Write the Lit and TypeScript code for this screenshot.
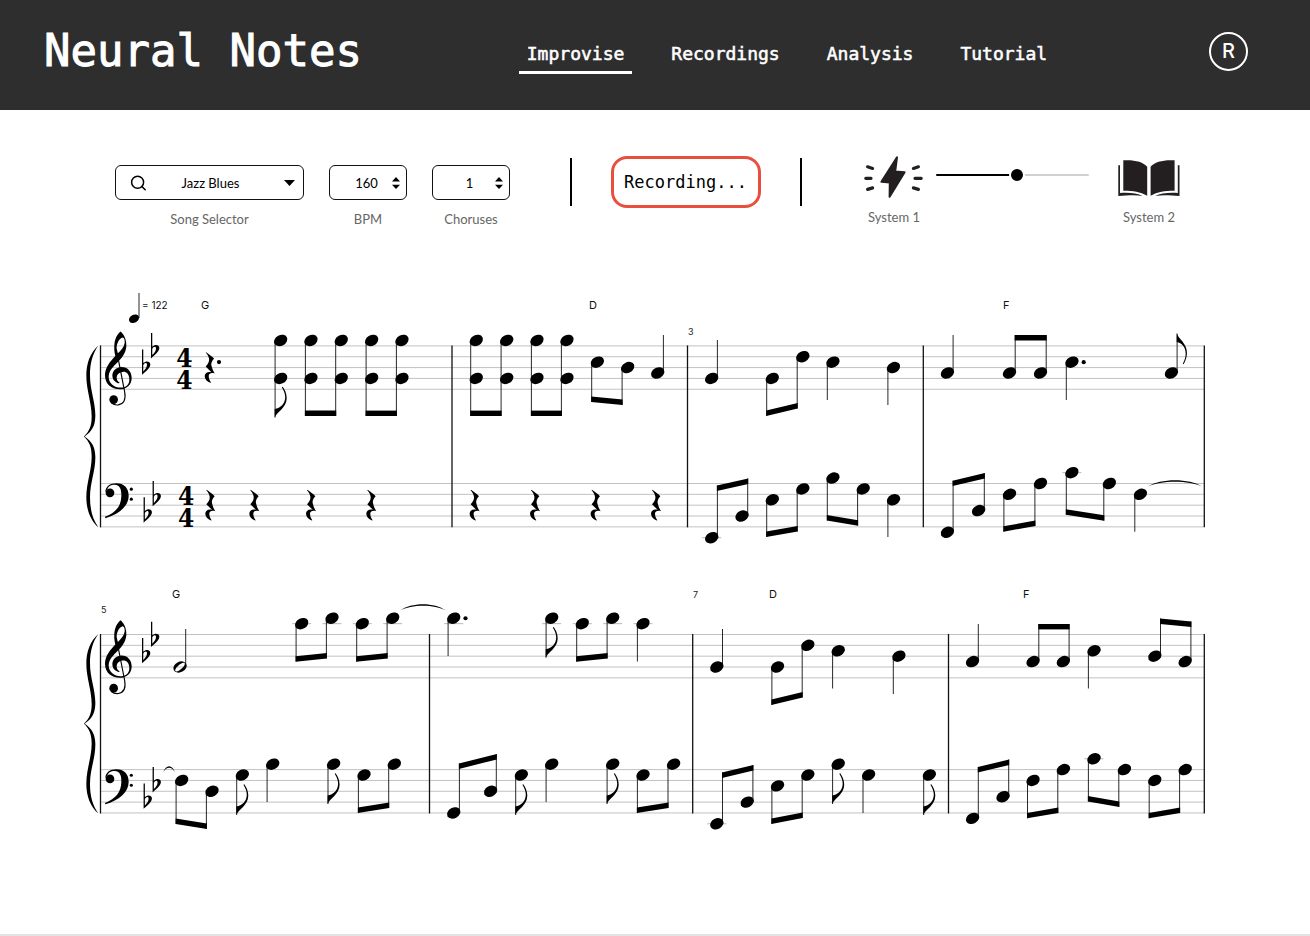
import { LitElement, html, svg, css } from "lit";
import { customElement, property, state } from "lit/decorators.js";

type Pt = [number, number[]];

/** A stemmed group: one or more heads, with the stem ends of its first and last head. */
interface Group {
  heads: Pt[];
  up?: boolean;
  ends: [number, number?];
  flag?: boolean;
  dot?: boolean;
  half?: boolean;
}

interface Staff {
  top: number;
  groups: Group[];
  rests?: [number, boolean?][];
  ties?: [number, number, number, number][];
}

interface System {
  bars: number[];
  treble: Staff;
  bass: Staff;
  chords: [string, number, number][];
  numbers: [string, number, number][];
  time?: boolean;
}

const STEP = 5.42;

const down = (ends: [number, number?], ...heads: Pt[]): Group => ({ heads, ends });
const up = (ends: [number, number?], ...heads: Pt[]): Group => ({ heads, ends, up: true });
const chordPair = (a: number, b: number): Group =>
  down([416, 416], [a, [-1, 6]], [b, [-1, 6]]);

const SYSTEMS: System[] = [
  {
    bars: [100.5, 452, 687.5, 923.3, 1204.3],
    time: true,
    chords: [["G", 201, 309], ["D", 589, 309], ["F", 1003, 309]],
    numbers: [["3", 688, 335]],
    treble: {
      top: 345.9,
      rests: [[204.7, true]],
      groups: [
        { ...down([417.5], [280.7, [-1, 6]]), flag: true },
        chordPair(311, 341.3),
        chordPair(371.7, 402),
        chordPair(476.3, 506.7),
        chordPair(537, 567),
        down([402, 405], [597.3, [3]], [627.7, [4]]),
        up([335], [657.7, [5]]),
        up([340], [711.7, [6]]),
        down([416, 408.5], [772.3, [6]], [802.8, [2]]),
        down([400], [832.9, [3]]),
        down([405], [893.5, [4]]),
        up([335], [947.4, [5]]),
        up([335, 335], [1009.5, [5]], [1040.5, [5]]),
        { ...down([400], [1071.9, [3]]), dot: true },
        { ...up([333.5], [1171.4, [5]]), flag: true },
      ],
    },
    bass: {
      top: 483.5,
      rests: [[205.3], [249.3], [306], [366.3], [469.6], [530], [590.6], [651]],
      ties: [[1147.5, 486.5, 1202.5, 478]],
      groups: [
        up([485.5, 478.5], [711.7, [10]], [742, [6]]),
        down([537, 531.5], [772.3, [3]], [802.8, [1]]),
        down([520.5, 525.7], [832.9, [-1]], [863.2, [1]]),
        down([537], [893.5, [3]]),
        up([480.7, 473], [947.4, [9]], [978.6, [5]]),
        down([531.7, 526], [1009.5, [2]], [1040.5, [0]]),
        down([514.7, 520.7], [1071.9, [-2]], [1109.4, [0]]),
        down([531.7], [1140.4, [2]]),
      ],
    },
  },
  {
    bars: [100.5, 429.5, 692.7, 948.5, 1204.3],
    chords: [["G", 172, 598], ["D", 769, 598], ["F", 1023, 598]],
    numbers: [["5", 101, 613], ["7", 693, 598]],
    treble: {
      top: 634.5,
      ties: [[400, 610.5, 446, 602]],
      groups: [
        { ...up([629], [180, [6]]), half: true },
        down([661.7, 658.5], [301.7, [-2]], [332, [-3]]),
        down([661.7, 658.5], [362.3, [-2]], [392.7, [-3]]),
        { ...down([656], [453.7, [-3]]), dot: true },
        { ...down([657.7], [551.7, [-3]]), flag: true },
        down([661.7, 658.5], [582.3, [-2]], [612.7, [-3]]),
        down([661.5], [643, [-2]]),
        up([629], [716.8, [6]]),
        down([705, 697.5], [777.5, [6]], [807.8, [2]]),
        down([688.5], [838.2, [3]]),
        down([694], [898.9, [4]]),
        up([624], [972.6, [5]]),
        up([624, 624], [1033.1, [5]], [1063.4, [5]]),
        down([688.5], [1094, [3]]),
        up([618.5, 621.5], [1154.8, [4]], [1185.2, [5]]),
      ],
    },
    bass: {
      top: 769.6,
      ties: [[163.2, 772.5, 175, 764]],
      groups: [
        down([824, 829], [181.7, [2]], [212, [4]]),
        { ...down([815], [242.3, [1]]), flag: true },
        down([802], [272.7, [-1]]),
        { ...down([804], [333.6, [-1]]), flag: true },
        down([813, 808], [364, [1]], [394.3, [-1]]),
        up([763.5, 754], [453.7, [8]], [490.6, [4]]),
        { ...down([815], [521.3, [1]]), flag: true },
        down([802], [551.7, [-1]]),
        { ...down([804], [612.7, [-1]]), flag: true },
        down([813, 808], [643, [1]], [673.6, [-1]]),
        up([772.5, 765], [716.8, [10]], [747.2, [6]]),
        down([824, 818], [777.5, [3]], [807.8, [1]]),
        { ...down([804], [838.2, [-1]]), flag: true },
        down([813], [868.6, [1]]),
        { ...down([815], [929.3, [1]]), flag: true },
        up([767, 759.5], [972.6, [9]], [1003, [5]]),
        down([818.3, 813], [1033.1, [2]], [1063.4, [0]]),
        down([801.5, 807], [1094, [-2]], [1124.4, [0]]),
        down([818.3, 813], [1154.8, [2]], [1185.2, [0]]),
      ],
    },
  },
];

@customElement("music-score")
export class MusicScore extends LitElement {
  static styles = css`
    :host { display: block; }
    .sheet { display: block; width: 100%; height: auto; font-family: Inter, sans-serif; }
    .chord { font-size: 11px; fill: #111; }
    .tempo { font-size: 10px; fill: #111; }
    .number { font-size: 9px; fill: #222; }
    .time { font: bold 26px "DejaVu Serif Condensed", "DejaVu Serif", serif; text-anchor: middle; }
    .line { stroke: #c2c2c2; stroke-width: 1; }
    .ledger { stroke: #999; stroke-width: 0.7; }
    .bar { stroke: #111; stroke-width: 1.3; }
    .stem { stroke: #111; stroke-width: 0.9; }
    .curl { fill: none; stroke: #000; stroke-width: 3.4; }
  `;

  private head(x: number, y: number, half = false) {
    return half
      ? svg`<g transform="translate(${x} ${y}) rotate(-28)">
          <path fill-rule="evenodd" d="M-7 0A7 5.2 0 1 1 7 0A7 5.2 0 1 1 -7 0Z M-6 1.4C-5 4.2 6.4 1.6 6 -1.4C5 -4.2 -6.4 -1.6 -6 1.4Z"/></g>`
      : svg`<ellipse rx="7" ry="5.3" transform="translate(${x} ${y}) rotate(-28)"/>`;
  }

  private group(g: Group, top: number) {
    const first = g.heads[0][0];
    const last = g.heads[g.heads.length - 1][0];
    const side = g.up ? 5.7 : -5.6;
    const [a, b = a] = g.ends;
    const beamed = g.heads.length > 1;
    const thick = g.up ? 5.4 : -5.4;
    return svg`
      ${g.heads.map(([x, steps], i) => {
        const ys = steps.map((s) => top + s * STEP);
        const root = g.up ? Math.max(...ys) : Math.min(...ys);
        const end = i === 0 ? a : b;
        return svg`
          ${steps.filter((s) => s <= -2 || s >= 10).map((s) => {
            const y = top + (s < 0 ? -2 : 10) * STEP;
            return svg`<line class="ledger" x1=${x - 9.5} x2=${x + 9.5} y1=${y} y2=${y}/>`;
          })}
          <line class="stem" x1=${x + side} x2=${x + side} y1=${root} y2=${end}/>
          ${ys.map((y) => this.head(x, y, g.half))}
          ${g.dot ? svg`<circle cx=${x + 11.8} cy=${root} r="2.1"/>` : null}`;
      })}
      ${beamed
        ? svg`<path d="M${first + side - 0.5} ${a}L${last + side + 0.5} ${b}V${b + thick}L${first + side - 0.5} ${a + thick}Z"/>`
        : null}
      ${g.flag
        ? svg`<path transform="translate(${first + side} ${a}) scale(${g.up ? 0.85 : 1} ${g.up ? -1 : 1})"
            d="M-.4 0C1.6 -5.5 11.6 -9.5 11.6 -19.5C11.6 -24 9.5 -28.2 7.6 -30.7L6.7 -30.2C8.8 -27 10.1 -23.6 10.1 -20.2C10 -13.6 5.5 -9.4 -.4 -8.6Z"/>`
        : null}`;
  }

  private rest(x: number, top: number, dot = false) {
    return svg`<g transform="translate(${x} ${top + 6.3}) scale(.3333)">
        <path d="M4 0C12 6 23 13 28 19C20 28 18 36 21 43C23 50 25 56 30 64C21 61 13 63 12 71C12 79 15 86 19 91L17 92C7 88 0 81 0 72C0 62 9 57 20 60L3 43C11 35 14 28 13 20C12 12 7 6 3 1Z"/>
      </g>
      ${dot ? svg`<circle cx=${x + 14.3} cy=${top + 16.2} r="2.1"/>` : null}`;
  }

  private flat(x: number, y: number) {
    return svg`<path transform="translate(${x} ${y}) scale(.3333)" fill-rule="evenodd"
      d="M0 0H3.8V41C12 33 25 35 25 45C24 57 12 65 0 76Z M3.8 47V66C10 60 15 53 15 46C15 38 7 40 3.8 47Z"/>`;
  }

  private staff(s: Staff, bass: boolean, time = false) {
    const shift = bass ? 1.6 : 0;
    const flatDrop = bass ? 13.8 : 3.5;
    return svg`
      ${[0, 2, 4, 6, 8].map((n) => {
        const y = s.top + n * STEP;
        return svg`<line class="line" x1="100" x2="1204" y1=${y} y2=${y}/>`;
      })}
      ${bass
        ? svg`<g transform="translate(75 ${s.top}) scale(.3333)">
            <circle cx="105" cy="28" r="13"/>
            <path d="M91 26C91 9 105 -1 124 -1C147 -1 161 13 161 37C161 68 132 92 91 104L90 100C123 87 138 68 139 38C140 17 134 4 119 4C107 4 99 10 97 18Z"/>
            <circle cx="169" cy="17" r="4.8"/><circle cx="169" cy="47" r="4.8"/></g>`
        : svg`<g transform="translate(75 ${s.top}) scale(.3333)">
            <path fill-rule="evenodd" d="M137 -43C149 -32 155 -16 154 2C152 26 136 41 124 53C111 66 101 77 101 94C102 114 119 126 139 125C154 124 164 115 163 99C162 84 154 77 143 78C131 79 125 87 125 95C125 103 129 108 134 110C133 113 130 113 127 111C117 107 112 99 112 89C112 75 124 63 140 63C158 63 170 77 170 96C170 117 154 130 135 130C108 130 90 114 90 88C90 64 106 46 121 30C118 18 117 8 118 -2C119 -20 126 -35 137 -43Z M143 -25C133 -23 126 -8 125 3C125 11 125 17 128 23C139 12 147 4 149 -9C150 -18 147 -25 143 -25Z"/>
            <path class="curl" d="M124 10L149 138C153 160 146 174 130 177C122 178 115 176 109 171"/>
            <circle cx="116" cy="161" r="13"/></g>`}
      ${this.flat(142 + shift, s.top + flatDrop)}
      ${this.flat(151 + shift, s.top + flatDrop - 16.3)}
      ${time
        ? svg`<text class="time" y=${s.top + 21.3}><tspan x=${184.5 + shift}>4</tspan><tspan x=${184.5 + shift} dy="21.7">4</tspan></text>`
        : null}
      ${s.rests?.map(([x, dot]) => this.rest(x, s.top, dot))}
      ${s.groups.map((g) => this.group(g, s.top))}
      ${s.ties?.map(([x1, y, x2, peak]) => {
        const q = (x2 - x1) / 4;
        return svg`<path d="M${x1} ${y}C${x1 + q} ${peak} ${x2 - q} ${peak} ${x2} ${y}C${x2 - q} ${peak + 2} ${x1 + q} ${peak + 2} ${x1} ${y}Z"/>`;
      })}`;
  }

  private system(s: System) {
    const top = s.treble.top - 0.5;
    const bottom = s.bass.top + 8 * STEP + 0.5;
    return svg`
      <path transform="translate(75 ${top}) scale(.3333 ${(bottom - top) / 546})"
        d="M70 0C45 22 34 55 34 90C34 135 50 170 50 213C50 243 42 258 27 273C42 288 50 303 50 333C50 376 34 411 34 456C34 491 45 524 70 546C52 520 45 491 45 456C45 411 62 376 61 333C60 303 50 288 29 273C50 258 60 243 61 213C62 170 45 135 45 90C45 55 52 26 70 0Z"/>
      ${this.staff(s.treble, false, s.time)}
      ${this.staff(s.bass, true, s.time)}
      ${s.bars.map((x) => svg`<line class="bar" x1=${x} x2=${x} y1=${top} y2=${bottom}/>`)}
      ${s.chords.map(([t, x, y]) => svg`<text class="chord" x=${x} y=${y}>${t}</text>`)}
      ${s.numbers.map(([t, x, y]) => svg`<text class="number" x=${x} y=${y}>${t}</text>`)}`;
  }

  render() {
    return html`<svg class="sheet" viewBox="0 280 1310 560" role="img" aria-label="Sheet music">
      <line class="stem" x1="139" x2="139" y1="293" y2="318"/>
      <ellipse rx="5.3" ry="3.9" transform="translate(134 318.8) rotate(-28)"/>
      <text class="tempo" x="142" y="309">= 122</text>
      ${SYSTEMS.map((s) => this.system(s))}
    </svg>`;
  }
}

@customElement("number-field")
export class NumberField extends LitElement {
  static styles = css`
    :host { display: block; font-family: Lato, sans-serif; }
    .field { display: flex; flex-direction: column; align-items: center; gap: 11px; width: 78px; }
    .box { display: grid; align-items: center; box-sizing: border-box; width: 100%; height: 35px; border: 1px solid #111; border-radius: 6px; }
    .value { grid-area: 1 / 1; box-sizing: border-box; width: 100%; padding: 0 3px 0 0; border: 0; outline: 0; background: none; font: 13px Lato, sans-serif; color: #000; text-align: center; appearance: textfield; }
    .value::-webkit-inner-spin-button { appearance: none; margin: 0; }
    .arrows { grid-area: 1 / 1; justify-self: end; margin-right: 6px; pointer-events: none; }
    .label { font-size: 13px; line-height: 16px; color: #666; }
  `;
  @property() label = "";
  @property({ type: Number }) value = 0;

  render() {
    return html`<div class="field">
      <div class="box">
        <input id="value" class="value" type="number" min="1" .value=${String(this.value)} />
        <svg class="arrows" width="8" height="12" viewBox="0 0 8 12"><path d="M4 0L8 4.6H0ZM4 12L8 7.8H0Z"/></svg>
      </div>
      <label class="label" for="value">${this.label}</label>
    </div>`;
  }
}

@customElement("app-root")
export class AppRoot extends LitElement {
  static styles = css`
    :host { display: flex; flex-direction: column; box-sizing: border-box; min-height: 100vh; border-bottom: 2px solid #e4e4e4; background: #fff; color: #000; font-family: Lato, sans-serif; }
    .header { display: flex; align-items: center; justify-content: space-between; box-sizing: border-box; height: 110px; padding: 0 62px 8px 44px; background: #2e2e2e; color: #fff; }
    .logo { margin: 0; font: 44px/52px "DejaVu Sans Mono", monospace; -webkit-text-stroke: 1px #fff; }
    .nav { display: flex; gap: 31px; margin-left: 3px; }
    .link { padding: 14px 8px 5px; border-bottom: 3px solid transparent; font: 18px/24px "DejaVu Sans Mono", monospace; -webkit-text-stroke: 0.03em #fff; color: #fff; text-decoration: none; }
    .current { border-color: #fff; }
    .avatar { box-sizing: border-box; width: 39px; height: 39px; padding: 0; border: 2px solid #fff; border-radius: 50%; background: none; color: #fff; font: 500 20px Inter, sans-serif; }
    .toolbar { display: flex; justify-content: space-between; padding: 46px 130px 0 115px; }
    .fields { display: flex; gap: 25px; padding-top: 9px; }
    .song { display: flex; flex-direction: column; align-items: center; gap: 11px; width: 189px; }
    .box { display: grid; align-items: center; box-sizing: border-box; width: 100%; height: 35px; border: 1px solid #111; border-radius: 6px; }
    .select { grid-area: 1 / 1; width: 100%; height: 100%; padding: 0 0 0 2px; border: 0; outline: 0; background: none; appearance: none; font: 13px Lato, sans-serif; color: #000; text-align: center; text-align-last: center; }
    .search { grid-area: 1 / 1; margin-left: 14px; pointer-events: none; }
    .caret { grid-area: 1 / 1; justify-self: end; margin-right: 8px; pointer-events: none; }
    .label { font-size: 13px; line-height: 16px; color: #666; }
    .middle { display: flex; align-items: center; gap: 39px; height: 52px; margin-right: 3px; }
    .divider { width: 2px; height: 48px; background: #000; }
    .record { height: 52px; width: 150px; padding: 0; border: 3px solid #e94f3f; border-radius: 16px; background: #fff; color: #000; font: 17px "DejaVu Sans Mono", monospace; white-space: nowrap; }
    .systems { display: flex; }
    .system { display: flex; flex-direction: column; align-items: center; gap: 11px; }
    .icon { display: block; fill: #231f20; stroke: #231f20; stroke-linejoin: round; stroke-linecap: round; }
    .slider { width: 153px; height: 16px; margin: 11px 29px 0 12px; appearance: none; background: none; }
    .slider::-webkit-slider-runnable-track { height: 2px; border-radius: 1px; background: linear-gradient(90deg, #000 var(--level), #d0d0d0 var(--level)); }
    .slider::-webkit-slider-thumb { appearance: none; box-sizing: border-box; width: 16px; height: 16px; margin-top: -7px; border: 2px solid #fff; border-radius: 50%; background: #000; }
    .score { margin-top: 53px; }
  `;

  @state() private balance = 53;

  render() {
    return html`
      <header class="header">
        <h1 class="logo">Neural Notes</h1>
        <nav class="nav">
          ${["Improvise", "Recordings", "Analysis", "Tutorial"].map(
            (name, i) => html`<a class="link ${i === 0 ? "current" : ""}" href="#${name.toLowerCase()}">${name}</a>`
          )}
        </nav>
        <button class="avatar">R</button>
      </header>
      <main>
        <section class="toolbar">
          <div class="fields">
            <div class="song">
              <div class="box">
                <select id="song" class="select"><option>Jazz Blues</option></select>
                <svg class="search" width="16" height="16" viewBox="0 0 16 16" fill="none" stroke="#000" stroke-width="1.5" stroke-linecap="round">
                  <circle cx="7.6" cy="7.2" r="6"/><path d="M12 11.6L15.2 14.8"/>
                </svg>
                <svg class="caret" width="11" height="6" viewBox="0 0 11 6"><path d="M0 0H11L5.5 6Z"/></svg>
              </div>
              <label class="label" for="song">Song Selector</label>
            </div>
            <number-field label="BPM" .value=${160}></number-field>
            <number-field label="Choruses" .value=${1}></number-field>
          </div>
          <div class="middle">
            <span class="divider"></span>
            <button class="record">Recording...</button>
            <span class="divider"></span>
          </div>
          <div class="systems">
            <div class="system">
              <svg class="icon" width="60" height="42" viewBox="1 1 60 42">
                <path stroke-width="2" d="M34 2.4L32.2 16.4L41.6 17.2L26.6 41.8L26.8 27.6L18.4 26.8Z"/>
                <path fill="none" stroke-width="3.2" d="M4.6 11.8L9.6 13.4M2.8 23.3H8M4.6 34.4L9.6 32.9M50.4 13.4L55.4 11.8M52 23.3H58.2M50.4 32.9L55.4 34.4"/>
              </svg>
              <label class="label" for="balance">System 1</label>
            </div>
            <input id="balance" class="slider" type="range" min="0" max="100" .value=${String(this.balance)}
              style="--level: ${this.balance}%"
              @input=${(e: Event) => (this.balance = Number((e.target as HTMLInputElement).value))} />
            <div class="system">
              <svg class="icon" width="62" height="42" viewBox="0 -2 62 42">
                <path stroke="none" d="M5.3 2.3C16 1.6 25 3.6 29.2 8.8V37.7C22 33.5 14 32.6 5.3 32.7ZM32.6 8.8C36.6 3.6 46 1.6 56.6 2.3V32.7C48 32.6 39.6 33.5 32.6 37.7Z"/>
                <path stroke="none" d="M.3 7.3H2V35C10 34.2 19 35 24.6 38C18 36.8 10 37.2 .3 38ZM61.5 7.3H59.8V35C51.8 34.2 42.8 35 37.2 38C43.8 36.8 51.8 37.2 61.5 38Z"/>
              </svg>
              <span class="label">System 2</span>
            </div>
          </div>
        </section>
        <music-score class="score"></music-score>
      </main>
    `;
  }
}
